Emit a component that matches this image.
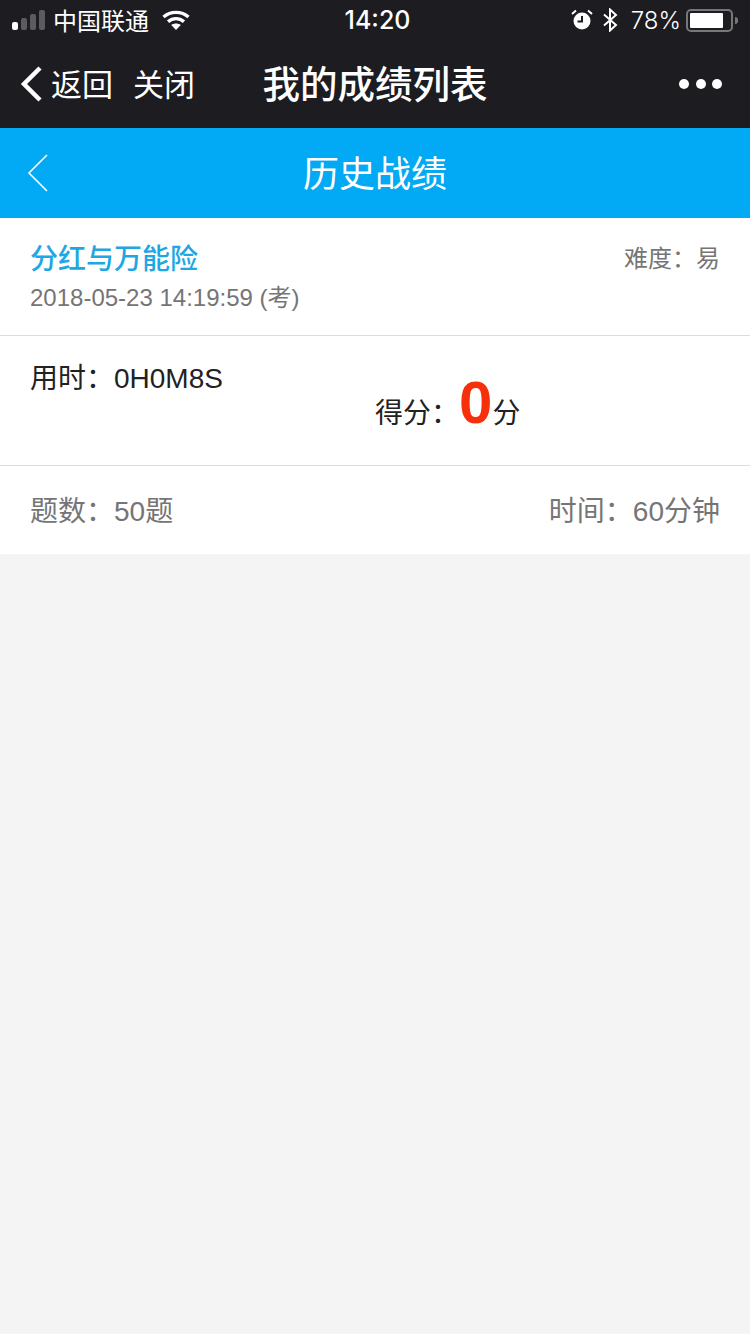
<div class="page">
  <div class="status">
    <div class="status-left">
      <svg class="signal" width="34" height="22" viewBox="0 0 34 22">
        <rect x="0" y="13" width="6" height="8" rx="2" fill="#fff" />
        <rect x="9" y="9" width="6" height="12" rx="2" fill="#5c5c60" />
        <rect x="18" y="5" width="6" height="16" rx="2" fill="#5c5c60" />
        <rect x="27" y="1" width="6" height="20" rx="2" fill="#5c5c60" />
      </svg>
      <span class="carrier">中国联通</span>
      <svg class="wifi" width="28" height="20" viewBox="0 0 28 20" fill="none" stroke="#fff" stroke-width="3.4">
        <path d="M1.5 7 C8.5 0.8 19.5 0.8 26.5 7" />
        <path d="M6 11.6 C10.8 7.6 17.2 7.6 22 11.6" />
        <path d="M14 20 L9.2 15 C12 13 16 13 18.8 15 Z" fill="#fff" stroke="none" />
      </svg>
    </div>
    <span class="clock">14:20</span>
    <div class="status-right">
      <svg width="22" height="22" viewBox="0 0 22 22">
        <circle cx="11" cy="12" r="8.5" fill="#fff" />
        <path d="M11 7 V12.5 H6.5" fill="none" stroke="#1c1c21" stroke-width="2" />
        <path d="M1 5 L5 1.5 M21 5 L17 1.5" stroke="#fff" stroke-width="2" />
      </svg>
      <svg class="bt" width="16" height="24" viewBox="0 0 16 24" fill="none" stroke="#fff" stroke-width="2">
        <path d="M2 6.5 L14 17 L8 22.5 V1.5 L14 7 L2 17.5" />
      </svg>
      <span class="percent">78%</span>
      <div class="battery"><div class="battery-fill"></div></div>
      <div class="battery-tip"></div>
    </div>
  </div>

  <div class="nav">
    <svg class="nav-back" width="24" height="36" viewBox="0 0 24 36" fill="none" stroke="#fff" stroke-width="4.5">
      <path d="M20 2 L4 18 L20 34" />
    </svg>
    <span class="nav-link">返回</span>
    <span class="nav-link close">关闭</span>
    <span class="nav-title">我的成绩列表</span>
    <div class="dots"><i></i><i></i><i></i></div>
  </div>

  <div class="header">
    <svg class="header-back" width="22" height="38" viewBox="0 0 22 38" fill="none" stroke="#fff" stroke-width="1.6">
      <path d="M20 1 L2 19 L20 37" />
    </svg>
    <span class="header-title">历史战绩</span>
  </div>

  <div class="card">
    <div class="row top">
      <div>
        <div class="name">分红与万能险</div>
        <div class="date">2018-05-23 14:19:59 (考)</div>
      </div>
      <div class="level">难度：易</div>
    </div>
    <div class="row middle">
      <div class="used">用时：0H0M8S</div>
      <div class="score">得分：<b>0</b>分</div>
    </div>
    <div class="row bottom">
      <span>题数：50题</span>
      <span>时间：60分钟</span>
    </div>
  </div>
</div>

<style>
:global(body) {
  margin: 0;
  background: #f4f4f4;
}
.page {
  min-height: 1334px;
  background: #f4f4f4;
  font-family: "Liberation Sans", "Noto Sans CJK SC", sans-serif;
}
.status {
  height: 40px;
  background: #1c1c21;
  color: #fff;
  display: grid;
  grid-template-columns: 1fr auto 1fr;
  align-items: center;
  padding: 0 12px 0 12px;
}
.status-left, .status-right {
  display: flex;
  align-items: center;
}
.status-right {
  justify-content: flex-end;
  gap: 9px;
}
.carrier {
  font-size: 24px;
  margin-left: 7px;
  padding-bottom: 2px;
}
.wifi {
  margin-left: 13px;
}
.clock {
  font-size: 25px;
  font-weight: 500;
  font-family: Inter, "Liberation Sans", sans-serif;
  padding-left: 5px;
}
.percent {
  font-size: 24px;
  font-family: Inter, "Liberation Sans", sans-serif;
  font-weight: 300;
  margin-left: 4px;
  margin-right: -4px;
}
.battery {
  width: 47px;
  height: 23px;
  border: 2px solid #77777a;
  border-radius: 5px;
  padding: 2px;
  box-sizing: border-box;
  margin-right: -7px;
}
.battery-fill {
  width: 33px;
  height: 100%;
  background: #fff;
  border-radius: 1px;
}
.battery-tip {
  width: 3px;
  height: 7px;
  background: #77777a;
  border-radius: 0 3px 3px 0;
}
.nav {
  height: 88px;
  background: #1c1c21;
  color: #fff;
  display: flex;
  align-items: center;
  padding: 0 0 4px 20px;
  box-sizing: border-box;
  position: relative;
}
.nav-back {
  margin-top: 4px;
}
.nav-link {
  font-size: 31px;
  margin-left: 7px;
}
.nav-link.close {
  margin-left: 20px;
}
.nav-title {
  position: absolute;
  left: 0;
  right: 0;
  margin-top: -2px;
  text-align: center;
  font-size: 37.5px;
  font-weight: 500;
}
.dots {
  position: absolute;
  right: 28px;
  top: 39px;
  display: flex;
  gap: 6.5px;
}
.dots i {
  width: 10px;
  height: 10px;
  border-radius: 50%;
  background: #fff;
}
.header {
  height: 90px;
  background: #02a9f4;
  color: #fff;
  display: flex;
  align-items: center;
  justify-content: center;
  padding-bottom: 4px;
  box-sizing: border-box;
  position: relative;
}
.header-back {
  position: absolute;
  left: 27px;
  top: 26px;
}
.header-title {
  font-size: 36px;
}
.card {
  background: #fff;
}
.row {
  display: flex;
  justify-content: space-between;
  padding: 0 30px;
  box-sizing: border-box;
}
.top {
  height: 118px;
  border-bottom: 1px solid #dcdcdc;
  padding-top: 22px;
}
.name {
  font-size: 28px;
  font-weight: 500;
  color: #1ea7e4;
  line-height: 38px;
  margin-top: 1px;
}
.date {
  font-size: 24px;
  color: #757575;
  margin-top: 3px;
  line-height: 32px;
}
.level {
  font-size: 24px;
  color: #757575;
  line-height: 38px;
}
.middle {
  height: 130px;
  border-bottom: 1px solid #dcdcdc;
  color: #222;
  font-size: 28px;
  justify-content: flex-start;
}
.used {
  margin-top: 20px;
  width: 345px;
}
.score {
  margin-top: 37px;
  line-height: 60px;
}
.score b {
  color: #f5300a;
  font-size: 60px;
}
.bottom {
  height: 88px;
  align-items: center;
  padding-bottom: 2px;
  color: #757575;
  font-size: 28px;
}
</style>
